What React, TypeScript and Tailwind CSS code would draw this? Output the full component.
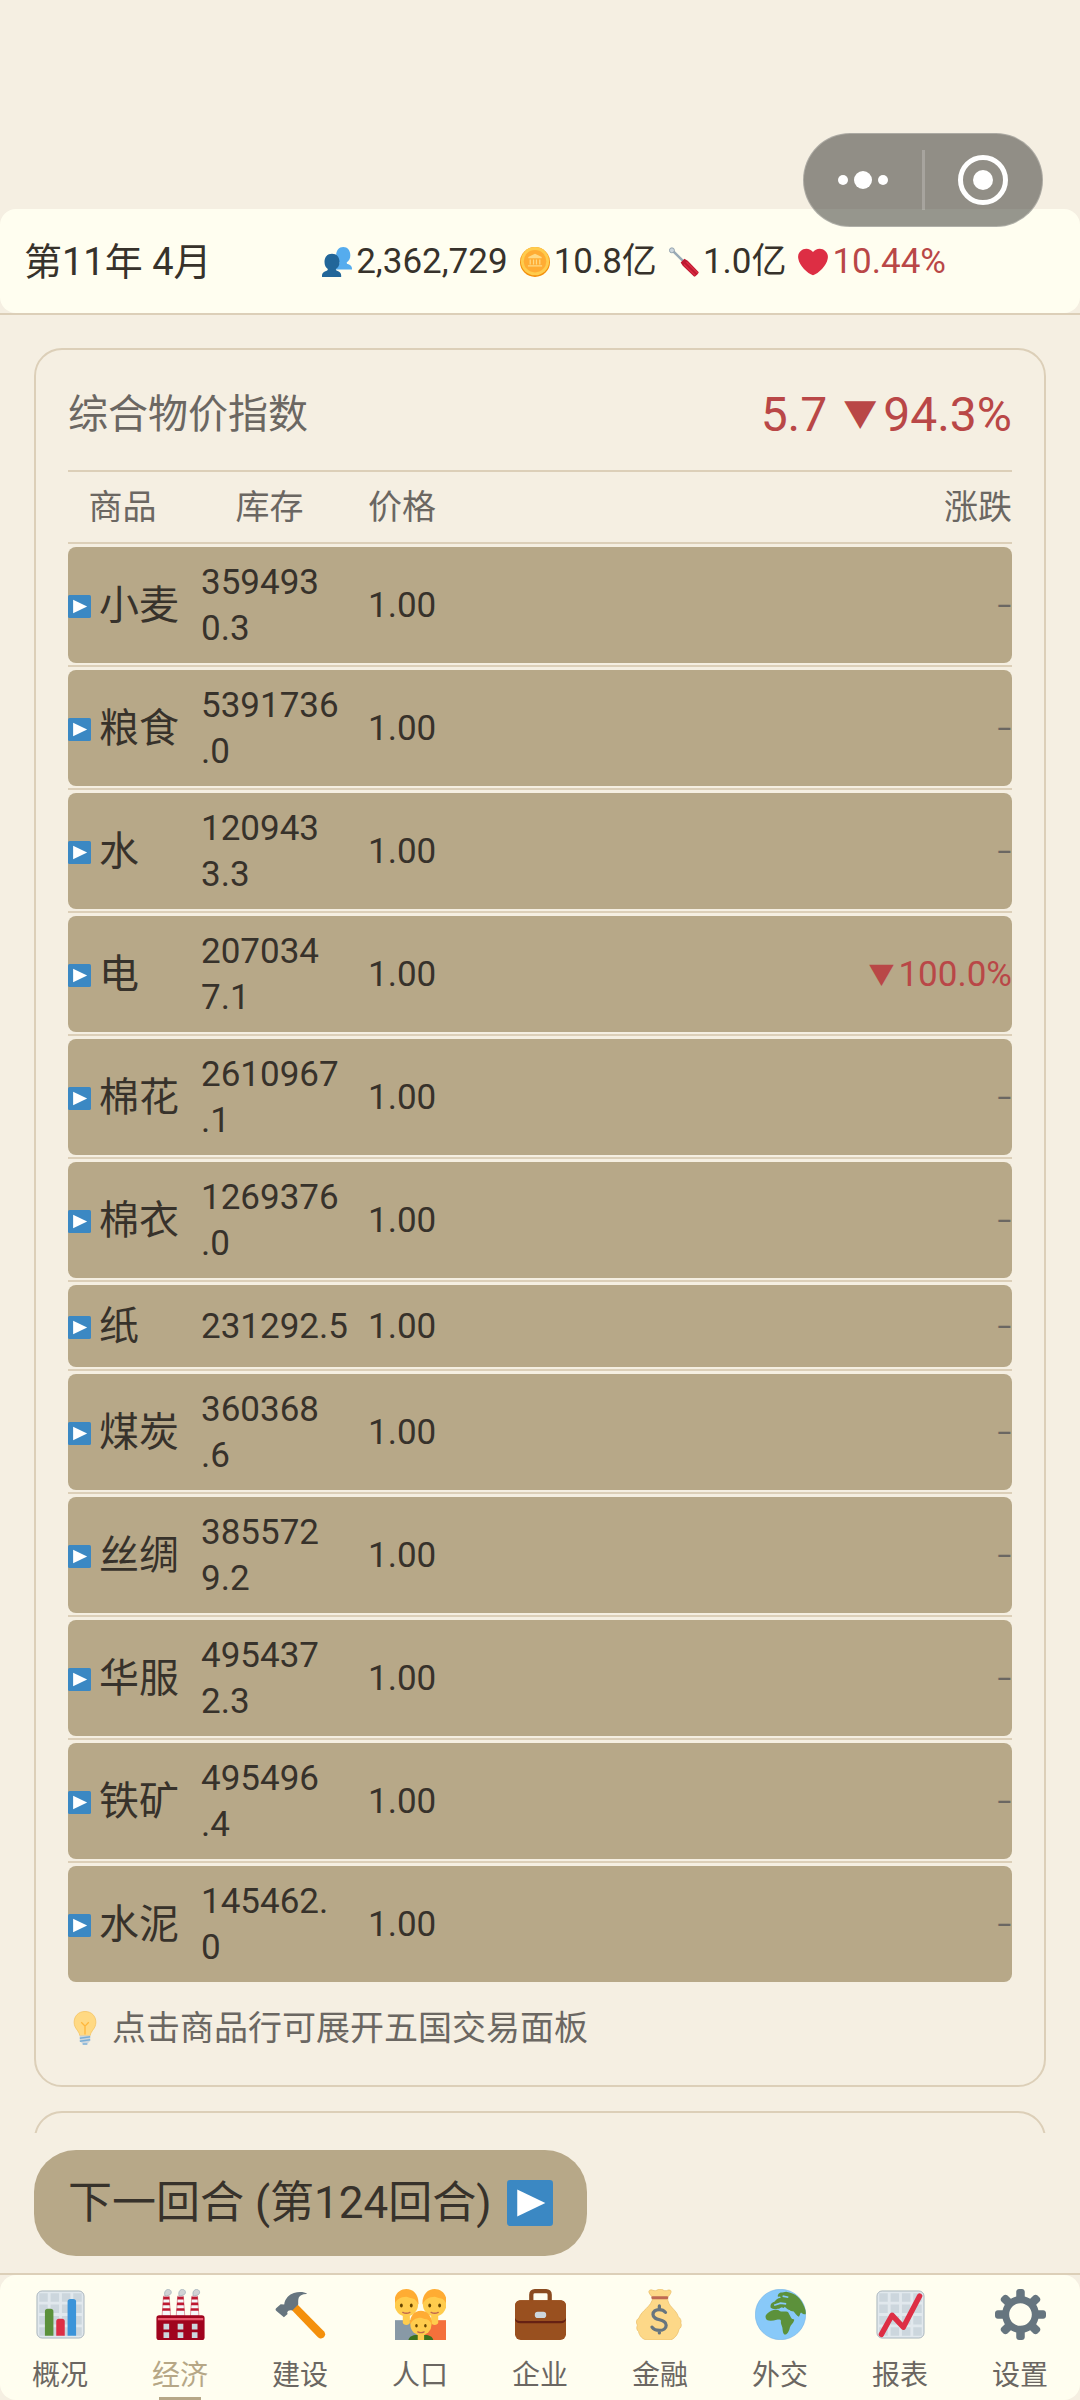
import type { ReactNode } from "react";

const goods = [
    { name: "小麦", stock: ["359493", "0.3"], price: "1.00", change: "" },
    { name: "粮食", stock: ["5391736", ".0"], price: "1.00", change: "" },
    { name: "水", stock: ["120943", "3.3"], price: "1.00", change: "" },
    { name: "电", stock: ["207034", "7.1"], price: "1.00", change: "100.0%" },
    { name: "棉花", stock: ["2610967", ".1"], price: "1.00", change: "" },
    { name: "棉衣", stock: ["1269376", ".0"], price: "1.00", change: "" },
    { name: "纸", stock: ["231292.5"], price: "1.00", change: "" },
    { name: "煤炭", stock: ["360368", ".6"], price: "1.00", change: "" },
    { name: "丝绸", stock: ["385572", "9.2"], price: "1.00", change: "" },
    { name: "华服", stock: ["495437", "2.3"], price: "1.00", change: "" },
    { name: "铁矿", stock: ["495496", ".4"], price: "1.00", change: "" },
    { name: "水泥", stock: ["145462.", "0"], price: "1.00", change: "" },
];

function Svg({ className, children }: { className: string; children: ReactNode }) {
    return (
        <svg viewBox="0 0 36 36" className={`shrink-0 ${className}`} aria-hidden="true">
            {children}
        </svg>
    );
}

function PlayIcon({ className }: { className: string }) {
    return (
        <Svg className={className}>
            <rect width="36" height="36" rx="2.5" fill="#3b88c3" />
            <path d="M8 7.500l22 10.500L8 28.500z" fill="#fff" />
        </Svg>
    );
}

function PeopleIcon({ className }: { className: string }) {
    return (
        <Svg className={className}>
            <path
                d="M36 27v-1c0-3-2-4.500-5-5.500-1-.4-1.400-1-1.400-2 2.900-1.900 4.400-4.500 4.400-8.500 0-6-3.400-10-8.500-10S17 4 17 10c0 4 1.500 6.600 4 8.500 0 1-.4 1.600-1.400 2L16 22v5z"
                fill="#55acee"
            />
            <path
                d="M23 36v-2c0-3-2-4.500-5-5.500-1-.4-1.400-1-1.400-2 2.900-1.900 4.400-4.500 4.400-8.500 0-6-3.400-10-9-10S3 12 3 18c0 4 1.500 6.600 4 8.500 0 1-.4 1.600-1.400 2C2.400 29.500 0 31 0 34v2z"
                fill="#226699"
            />
        </Svg>
    );
}

function CoinIcon({ className }: { className: string }) {
    return (
        <Svg className={className}>
            <circle cx="18" cy="18" r="18" fill="#f4900c" />
            <circle cx="18" cy="17" r="17" fill="#ffcc4d" />
            <circle cx="18" cy="17" r="13.500" fill="#ffac33" />
            <path d="M18 8l8 4v1.500H10V12zM11.500 15H13v6h-1.500zM15.500 15H17v6h-1.500zM19 15h1.500v6H19zM23 15h1.500v6H23zM9.500 22h17v1.500h-17z" fill="#ffd983" />
        </Svg>
    );
}

function ScrewdriverIcon({ className }: { className: string }) {
    return (
        <Svg className={className}>
            <path d="M4 4l13 13" fill="none" stroke="#99aab5" strokeWidth="3" strokeLinejoin="round" />
            <circle cx="3.500" cy="4" r="3" fill="#ccd6dd" stroke="#8899a6" strokeWidth="1" />
            <path d="M14 18.500l4.500-4.500 4 2.500 13 13.500c1 1-4.500 6.500-5.500 5.500L16.500 22.500z" fill="#be1931" />
            <path d="M18 21l13.500 13M21 18l13.500 13.500" stroke="#dd2e44" strokeWidth="1.600" />
        </Svg>
    );
}

function HeartIcon({ className }: { className: string }) {
    return (
        <Svg className={className}>
            <path
                d="M35.885 11.833c0-5.450-4.418-9.868-9.867-9.868-3.308 0-6.227 1.633-8.018 4.129-1.791-2.496-4.710-4.129-8.017-4.129-5.450 0-9.868 4.417-9.868 9.868 0 .772.098 1.520.266 2.241C1.751 22.587 11.216 31.568 18 34.034c6.783-2.466 16.249-11.447 17.617-19.959.170-.721.268-1.469.268-2.242z"
                fill="#dd2e44"
            />
        </Svg>
    );
}

function BulbIcon({ className }: { className: string }) {
    return (
        <Svg className={className}>
            <path
                d="M18 .5C11 .5 6.500 5.500 6.500 11.800c0 7 5.200 8.700 6 14.200h11c.8-5.500 6-7.200 6-14.200C29.500 5.500 25 .5 18 .5z"
                fill="#ffd983"
                stroke="#f3c25f"
                strokeWidth=".8"
            />
            <path d="M18 25v-9l-4-4M18 16l4-4" fill="none" stroke="#ffb73b" strokeWidth="1.400" />
            <path d="M12.500 26h11v5.500L21 34.500h-6l-2.500-3z" fill="#ccd6dd" />
            <path d="M12.500 28.800l11-1.600M12.500 32l11-1.600M15.500 35h5" stroke="#7aaed6" strokeWidth="1.500" />
        </Svg>
    );
}

// sheet of squared paper shared by the two chart icons
function ChartPaper() {
    return (
        <>
            <rect x="1.400" y="1.400" width="33.200" height="33.200" rx="3.600" fill="#e1e8ed" stroke="#a9b4bc" strokeWidth=".7" />
            <path
                d="M3 3h6v6H3zM11 3h6v6h-6zM19 3h6v6h-6zM27 3h6v6h-6zM3 11h6v6H3zM11 11h6v6h-6zM19 11h6v6h-6zM27 11h6v6h-6zM3 19h6v6H3zM11 19h6v6h-6zM19 19h6v6h-6zM27 19h6v6h-6zM3 27h6v6H3zM11 27h6v6h-6zM19 27h6v6h-6zM27 27h6v6h-6z"
                fill="#ccd6dd"
            />
        </>
    );
}

function BarsIcon() {
    return (
        <Svg className="size-[51px]">
            <ChartPaper />
            <path d="M7 33V16a2 2 0 012-2h2a2 2 0 012 2v17z" fill="#5c913b" />
            <path d="M15 33V23a2 2 0 012-2h2a2 2 0 012 2v10z" fill="#dd2e44" />
            <path d="M23 33V9a2 2 0 012-2h2a2 2 0 012 2v24z" fill="#3b94d9" />
        </Svg>
    );
}

function FactoryIcon() {
    return (
        <Svg className="size-[51px]">
            {[0, 10, 20].map((x) => (
                <g key={x} transform={`translate(${x} 0)`}>
                    <path d="M6 5h4l1 14H5z" fill="#f5f8fa" stroke="#be1931" strokeWidth=".3" />
                    <path d="M5.900 5.500h4.200l.2 1.900H5.700zM5.600 9.500h4.800l.2 1.900H5.400zM5.300 13.500h5.400l.2 1.900H5.100z" fill="#be1931" />
                    <path d="M7 4.700C6.200 2 7.700.2 9.500.3c2 .2 2.600 2.300 1.300 3.500-.8.800-2.100.600-2.600 1.100z" fill="#d1d3d4" stroke="#99aab5" strokeWidth=".5" />
                </g>
            ))}
            <rect x="1" y="18.500" width="34" height="17.500" rx="2" fill="#a0041e" />
            <path d="M2 20.400h32v1.600H2z" fill="#ea596e" />
            <path d="M6 24.500h4v4H6zM16 24.500h4v4h-4zM26 24.500h4v4h-4zM6 30.500h4v4H6zM16 30.500h4v4h-4zM26 30.500h4v4h-4z" fill="#ccd6dd" />
        </Svg>
    );
}

function HammerIcon() {
    return (
        <Svg className="size-[51px]">
            <path d="M11.500 14.500l4-4L34.500 29.800c2.700 3-1.200 7-4.200 4.200z" fill="#f4900c" />
            <path
                d="M.8 13.500l3.200-2.800 2.500.2c.5-4 3.500-7 6.800-8C17 1.700 20.500 2 22.800 3.500c-3-.2-5 .7-6 2.500-.6 1.500-.4 3.300-.4 5l-4.200 4.200c-2-.6-3 .1-3.600 1.300l.3 1.200-2.600 2.200L1 15.500C.3 14.800.2 14.100.8 13.500z"
                fill="#66757f"
            />
        </Svg>
    );
}

function FamilyHead() {
    return (
        <>
            <path d="M-2.500 10h5v5.500c0 2.500-5 2.500-5 0z" fill="#ffcc4d" />
            <circle cx="0" cy="3" r="8.300" fill="#ffcc4d" />
            <path d="M-8.600 3C-9-4-5-8 0-8s9 4 8.600 11C7.500 1 6.500-1 4.500-1.300 2-1.500 1-2.500 0-2.500c-2 0-4 .5-5.500 1.500C-7-.2-7.800 1.500-8.600 3z" fill="#ffac33" />
            <ellipse cx="-3.500" cy="3.700" rx="1" ry="1.400" fill="#664500" />
            <ellipse cx="3.500" cy="3.700" rx="1" ry="1.400" fill="#664500" />
            <path d="M-2.500 8.500q2.500 1.300 5 0" fill="none" stroke="#c1694f" strokeWidth="1" strokeLinecap="round" />
        </>
    );
}

function FamilyIcon() {
    return (
        <Svg className="size-[51px]">
            <path d="M0 22h17v14H0z" fill="#8899a6" />
            <path d="M18 22h18v14H18z" fill="#f4703b" />
            <g transform="translate(8 8)">
                <FamilyHead />
            </g>
            <g transform="translate(28 8)">
                <FamilyHead />
            </g>
            <path d="M9.500 36c.5-2.500 3-3.500 5.500-3.500h6.500c2.500 0 5 1 5.500 3.500z" fill="#3e721d" />
            <g transform="translate(18.300 22.600) scale(.9)">
                <FamilyHead />
            </g>
        </Svg>
    );
}

function BriefcaseIcon() {
    return (
        <Svg className="size-[51px]">
            <path d="M11.500 9V4c0-1.500 1-2.500 2.500-2.500h8c1.500 0 2.500 1 2.500 2.500v5" fill="none" stroke="#8a4b20" strokeWidth="3" />
            <rect y="8" width="36" height="28" rx="4" fill="#99501f" />
            <path d="M0 19v2c0 2 1.500 3.200 3.500 3.200h29c2 0 3.500-1.200 3.500-3.200v-2z" fill="#662113" />
            <path d="M0 12c0-2.500 1.500-4 4-4h28c2.500 0 4 1.500 4 4v8c0 1.500-1.200 2.500-3 2.500H3c-1.800 0-3-1-3-2.500z" fill="#99501f" />
            <rect x="14" y="16" width="8" height="4.500" rx="2" fill="#ccd6dd" />
        </Svg>
    );
}

function MoneyBagIcon() {
    return (
        <Svg className="size-[51px]">
            <path
                d="M12.500 6C10 3.500 9 1.500 10.500.8c1.500-.7 2.500.7 4 .4 1.300-.3 1.700-1.200 3.300-1.200s2 1 3.200 1.200c1.500.300 2.600-1 4-.3 1.200.8 0 2.800-2 5.100-.2 6.500 6.500 8.500 7.500 13.500 1.500 1 2.500 3 1.800 4.500.9 1.500.2 3.500-1.300 4.500-.5 3.500-3.500 7.500-7 7.500H9c-3.500 0-6-3-6.500-6-1.500-1-1.500-3-.8-4.500C.5 23.500 1 21.500 2.800 20.500 4.500 15 12 12.500 12.500 6z"
                fill="#fdd888"
                stroke="#e8bd67"
                strokeWidth=".5"
            />
            <rect x="11.500" y="5.200" width="12" height="2" rx="1" fill="#bf6952" />
            <path
                d="M21.500 16.500c-1-1.300-2.500-2-4.500-2-2.500 0-4.300 1.300-4.300 3.500 0 4.700 9.300 2.800 9.300 7.500 0 2.300-2 3.700-4.700 3.700-2.300 0-4.300-.8-5.300-2.300M17.200 12v2.500M17.200 29.200V31"
                fill="none"
                stroke="#67757f"
                strokeWidth="2.300"
                strokeLinecap="round"
            />
        </Svg>
    );
}

function GlobeIcon() {
    return (
        <Svg className="size-[51px]">
            <circle cx="18" cy="18" r="17.800" fill="#88c9f9" stroke="#6fb0e2" strokeWidth=".4" />
            <path
                d="M8.500 17.500c2-2 4-2.600 6.300-2.800 1.500-.3 2 .6 3.500 1.100 1.500.4 3.300-.2 5 .5 1 1.500 1.700 3.500 2.700 4.700.8.600 2-.2 1.600 1.200-.6 2-2.300 2.900-3 5-.3 1.800-1.500 5-3.300 5-1.700 0-1.700-3-2-5-.3-1.800-1.300-2.700-1-4.500.1-1.200-1.300-1.300-3-1-2.300.6-4.800 1-6.900.2-1.200-1.500-1.500-3 .1-4.400z"
                fill="#5c913b"
            />
            <path
                d="M11 13c-.3-2.500 1-3.500 2.700-4 1-1 2-2.500 4.500-2.800l-.5-.9-1.500.2c-.5-1.800 1.200-3.200 3-3l2.800-.5c6.500.8 10.500 4.700 12.800 10.500.8 2 1.200 3.500 1 5.300-1.500.2-2.300-.6-3.300-1.300-.8.700-.7 1.900-1.500 3-1.700-.5-2.500-2.300-3.700-3.600-1.200-.3-2.500-.4-3.500-1.300-1-.2-1.800-1.200-2.800-2-.6 1.300-1.200.7-2 .2-1.500.5-1.700 1.400-3 1.200-1.800.4-3.700.3-5-1z"
                fill="#5c913b"
            />
            <path d="M19.500 5l4 .8M13.500 11.500l4.500-1.500 4 .5M24 15c.7 3 2.700 4.700 5.200 3.500" fill="none" stroke="#88c9f9" strokeWidth="1.200" />
        </Svg>
    );
}

function ReportIcon() {
    return (
        <Svg className="size-[51px]">
            <ChartPaper />
            <path d="M4.500 32L12 18.500 20 27 31.500 5" fill="none" stroke="#dd2e44" strokeWidth="3.800" strokeLinecap="round" strokeLinejoin="round" />
        </Svg>
    );
}

function GearIcon() {
    return (
        <Svg className="size-[51px]">
            <path
                d="M34 15h-3.362c-.324-1.369-.864-2.651-1.582-3.814l2.379-2.379c.781-.781.781-2.048 0-2.829l-1.414-1.414c-.781-.781-2.047-.781-2.828 0l-2.379 2.379C23.650 6.225 22.369 5.686 21 5.362V2c0-1.104-.896-2-2-2h-2c-1.104 0-2 .896-2 2v3.362c-1.369.324-2.651.864-3.814 1.582L8.808 4.565c-.781-.781-2.048-.781-2.828 0L4.565 5.979c-.781.781-.781 2.048-.001 2.829l2.379 2.379C6.225 12.350 5.686 13.632 5.362 15H2c-1.104 0-2 .896-2 2v2c0 1.104.896 2 2 2h3.362c.324 1.368.864 2.650 1.582 3.813l-2.379 2.379c-.780.780-.780 2.048.001 2.829l1.414 1.414c.780.780 2.047.780 2.828 0l2.379-2.379c1.163.719 2.445 1.258 3.814 1.582V34c0 1.104.896 2 2 2h2c1.104 0 2-.896 2-2v-3.362c1.368-.324 2.650-.864 3.813-1.582l2.379 2.379c.781.781 2.047.781 2.828 0l1.414-1.414c.781-.781.781-2.048 0-2.829l-2.379-2.379c.719-1.163 1.258-2.445 1.582-3.814H34c1.104 0 2-.896 2-2v-2C36 15.896 35.104 15 34 15zM18 26c-4.418 0-8-3.582-8-8s3.582-8 8-8 8 3.582 8 8-3.582 8-8 8z"
                fill="#66757f"
            />
        </Svg>
    );
}

const tabs = [
    { label: "概况", icon: <BarsIcon /> },
    { label: "经济", icon: <FactoryIcon />, active: true },
    { label: "建设", icon: <HammerIcon /> },
    { label: "人口", icon: <FamilyIcon /> },
    { label: "企业", icon: <BriefcaseIcon /> },
    { label: "金融", icon: <MoneyBagIcon /> },
    { label: "外交", icon: <GlobeIcon /> },
    { label: "报表", icon: <ReportIcon /> },
    { label: "设置", icon: <GearIcon /> },
];

// Mini-program capsule that floats over the top right corner
function Capsule() {
    return (
        <div className="absolute top-[133px] right-[37px] flex h-[94px] w-60 items-center rounded-full border border-white/25 bg-[#2d2e2a]/50">
            <button aria-label="更多" className="flex flex-1 items-center justify-center gap-1.5">
                <span className="size-2.5 rounded-full bg-white" />
                <span className="size-[18px] rounded-full bg-white" />
                <span className="size-2.5 rounded-full bg-white" />
            </button>
            <span className="h-[60px] w-[3px] bg-white/20" />
            <button aria-label="关闭" className="flex flex-1 items-center justify-center">
                <span className="flex size-[50px] items-center justify-center rounded-full border-5 border-white">
                    <span className="size-5 rounded-full bg-white" />
                </span>
            </button>
        </div>
    );
}

function StatusBar() {
    return (
        <header className="border-b-2 border-[#dccfb8]">
            <div className="flex h-[104px] items-center justify-between rounded-2xl bg-[#fffef0] pt-0.5 pr-[134px] pl-6">
                <h1 className="text-[38px]">第11年 4月</h1>
                <div className="flex items-center gap-3 text-[35px]">
                    <span className="flex items-center gap-1">
                        <PeopleIcon className="size-[30px]" />
                        2,362,729
                    </span>
                    <span className="flex items-center gap-1">
                        <CoinIcon className="size-[30px]" />
                        10.8亿
                    </span>
                    <span className="flex items-center gap-1">
                        <ScrewdriverIcon className="size-[30px]" />
                        1.0亿
                    </span>
                    <span className="flex items-center gap-1 text-[#b94747]">
                        <HeartIcon className="size-[30px]" />
                        10.44%
                    </span>
                </div>
            </div>
        </header>
    );
}

function GoodsTable() {
    return (
        <table className="block w-full text-left">
            <thead className="block">
                <tr className="grid h-[72px] grid-cols-[133px_167px_1fr_1fr] items-center border-b-2 border-[#dccfb8] text-[34px] text-[#6b6762]">
                    <th className="pr-6 text-center font-normal">商品</th>
                    <th className="pr-[30px] text-center font-normal">库存</th>
                    <th className="font-normal">价格</th>
                    <th className="text-right font-normal">涨跌</th>
                </tr>
            </thead>
            <tbody className="block">
                {goods.map((item) => (
                    <tr
                        key={item.name}
                        className="grid cursor-pointer grid-cols-[133px_167px_1fr_1fr] border-b-2 border-[#dccfb8] pt-[3px] pb-[2px] text-[35px] leading-[46px] last:border-b-0"
                    >
                        <td className="flex min-h-[82px] items-center gap-2 rounded-l-lg bg-[#b7a888] pt-0.5 text-[40px]">
                            <PlayIcon className="size-[23px]" />
                            {item.name}
                        </td>
                        <td className="flex flex-col justify-center bg-[#b7a888] pt-[13px] pb-[11px]">
                            {item.stock.map((line) => (
                                <span key={line}>{line}</span>
                            ))}
                        </td>
                        <td className="flex items-center bg-[#b7a888] pt-0.5">{item.price}</td>
                        <td className="flex items-center justify-end rounded-r-lg bg-[#b7a888] pt-0.5">
                            {item.change ? (
                                <span className="flex items-center gap-1 text-[#b94747]">
                                    <span className="text-[26px]">▼</span>
                                    {item.change}
                                </span>
                            ) : (
                                <span className="text-2xl font-medium text-[#6b6762]">–</span>
                            )}
                        </td>
                    </tr>
                ))}
            </tbody>
        </table>
    );
}

function PriceIndexCard() {
    return (
        <section className="shrink-0 rounded-[28px] border-2 border-[#dccfb8] px-8 pb-8">
            <div className="flex items-center justify-between border-b-2 border-[#dccfb8] pt-9 pb-[26px] leading-[58px]">
                <h2 className="text-[40px] text-[#6b6762]">综合物价指数</h2>
                <p className="flex items-center text-[48px] text-[#b94747]">
                    5.7
                    <span className="mr-1.5 ml-4 text-[34px]">▼</span>
                    94.3%
                </p>
            </div>
            <GoodsTable />
            <p className="flex items-center gap-2.5 pt-[19px] text-[34px] leading-[50px] text-[#6b6762]">
                <BulbIcon className="size-[34px]" />
                点击商品行可展开五国交易面板
            </p>
        </section>
    );
}

function TabBar() {
    return (
        <nav className="border-t-2 border-[#dccfb8]">
            <div className="grid grid-cols-9 rounded-2xl bg-[#fffef0]">
                {tabs.map((tab) => (
                    <a key={tab.label} href="#" className="flex flex-col items-center pt-3.5 text-[28px] leading-9">
                        {tab.icon}
                        <span className={tab.active ? "mt-[18px] text-[#b6a786]" : "mt-[18px] text-[#6b6762]"}>{tab.label}</span>
                        <span className={tab.active ? "mt-[3px] h-[3px] w-[42px] bg-[#b6a786]" : "mt-[3px] h-[3px]"} />
                    </a>
                ))}
            </div>
        </nav>
    );
}

export default function App() {
    return (
        <div className="relative flex h-screen flex-col bg-[#f5efe2] pt-[209px] font-['Roboto','Noto_Sans_CJK_SC',sans-serif] text-[#37322b]">
            <StatusBar />
            <main className="flex min-h-0 flex-1 flex-col gap-6 overflow-hidden px-[34px] pt-[33px]">
                <PriceIndexCard />
                <section className="h-60 shrink-0 rounded-[28px] border-2 border-[#dccfb8]" />
            </main>
            <div className="px-[34px] py-[17px]">
                <button className="flex h-[106px] items-center gap-4 rounded-[42px] bg-[#b7a888] px-[34px] text-[44px]">
                    下一回合 (第124回合)
                    <PlayIcon className="size-[46px]" />
                </button>
            </div>
            <TabBar />
            <Capsule />
        </div>
    );
}
